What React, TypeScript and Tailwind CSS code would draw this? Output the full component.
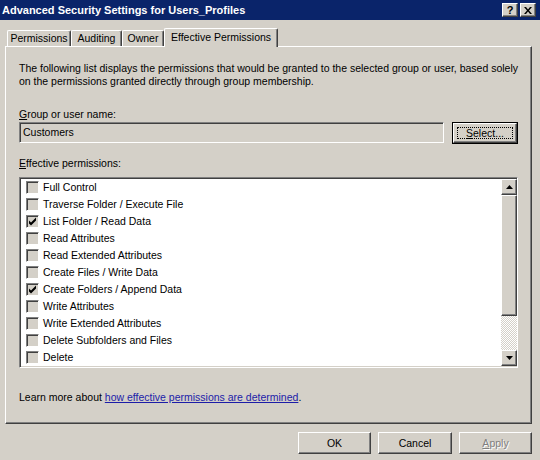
import React from 'react'

const PERMISSIONS: { label: string; checked: boolean }[] = [
  { label: 'Full Control', checked: false },
  { label: 'Traverse Folder / Execute File', checked: false },
  { label: 'List Folder / Read Data', checked: true },
  { label: 'Read Attributes', checked: false },
  { label: 'Read Extended Attributes', checked: false },
  { label: 'Create Files / Write Data', checked: false },
  { label: 'Create Folders / Append Data', checked: true },
  { label: 'Write Attributes', checked: false },
  { label: 'Write Extended Attributes', checked: false },
  { label: 'Delete Subfolders and Files', checked: false },
  { label: 'Delete', checked: false },
]

// classic 3D bevels
const raised =
  'border border-t-white border-l-white border-r-[#404040] border-b-[#404040] shadow-[inset_-1px_-1px_#808080,inset_1px_1px_#d4d0c8]'
const sunken =
  'border border-t-[#808080] border-l-[#808080] border-r-white border-b-white shadow-[inset_1px_1px_#404040,inset_-1px_-1px_#d4d0c8]'

function CheckBox({ checked }: { checked: boolean }) {
  return (
    <span className={`flex h-[13px] w-[13px] shrink-0 items-center justify-center bg-[#d4d0c8] ${sunken}`}>
      {checked && (
        <svg width="9" height="9" viewBox="0 0 9 9">
          <path d="M1 3.5 L3 5.5 L8 0.5 L8 3.5 L3 8.5 L1 6.5 Z" fill="#000" />
        </svg>
      )}
    </span>
  )
}

function Arrow({ up }: { up?: boolean }) {
  return (
    <svg width="7" height="4" viewBox="0 0 7 4">
      <path d={up ? 'M3.5 0 L7 4 L0 4 Z' : 'M0 0 L7 0 L3.5 4 Z'} fill="#000" />
    </svg>
  )
}

function Tab({ label, width, active }: { label: string; width: string; active?: boolean }) {
  return (
    <div
      className={`relative flex shrink-0 items-center justify-center rounded-t-[2px] border-t border-l border-r border-t-white border-l-white border-r-[#404040] bg-[#d4d0c8] shadow-[inset_-1px_0_#808080] ${width} ${
        active ? 'z-10 -mb-px h-[19px] pb-[2px]' : 'h-[16px]'
      }`}
    >
      {label}
    </div>
  )
}

export default function App() {
  return (
    <div className="h-[460px] w-[540px] overflow-hidden bg-[#d4d0c8] font-['Liberation_Sans',Arial,sans-serif] text-[10.5px] leading-[13px] text-black">
      {/* title bar */}
      <div className="flex h-[20px] items-center bg-[#0a246a] pl-[2px] pr-[4px]">
        <span className="text-[11px] font-bold text-white">Advanced Security Settings for Users_Profiles</span>
        <div className="ml-auto flex gap-[2px]">
          <span className={`flex h-[14px] w-[16px] items-center justify-center bg-[#d4d0c8] text-[11px] font-bold leading-none ${raised}`}>
            ?
          </span>
          <span className={`flex h-[14px] w-[16px] items-center justify-center bg-[#d4d0c8] ${raised}`}>
            <svg width="8" height="7" viewBox="0 0 8 7">
              <path d="M0 0 L2 0 L4 2.5 L6 0 L8 0 L5 3.5 L8 7 L6 7 L4 4.5 L2 7 L0 7 L3 3.5 Z" fill="#000" />
            </svg>
          </span>
        </div>
      </div>

      <div className="px-[5px] pt-[8px]">
        {/* tabs */}
        <div className="flex items-end pl-[2px]">
          <Tab label="Permissions" width="w-[64px]" />
          <Tab label="Auditing" width="w-[51px]" />
          <Tab label="Owner" width="w-[42px]" />
          <Tab label="Effective Permissions" width="w-[114px]" active />
        </div>

        {/* panel */}
        <div className="flex h-[378px] w-[527px] flex-col border border-t-white border-l-white border-r-[#404040] border-b-[#404040] pl-[13px] pt-[15px] shadow-[inset_-1px_-1px_#808080]">
          <p>
            The following list displays the permissions that would be granted to the selected group or user, based solely
            <br />
            on the permissions granted directly through group membership.
          </p>

          <div className="mt-[20px]">
            <span className="underline">G</span>roup or user name:
          </div>
          <div className="mt-[1px] flex items-start">
            <div className={`flex h-[21px] w-[425px] items-center bg-[#d4d0c8] pl-[3px] ${sunken}`}>Customers</div>
            <div className="ml-[8px] h-[22px] w-[66px] border border-black">
              <div className={`flex h-full w-full p-[3px] ${raised}`}>
                <span className="flex flex-1 items-center justify-center border border-dotted border-black">
                  <span>
                    <span className="underline">S</span>elect...
                  </span>
                </span>
              </div>
            </div>
          </div>

          <div className="mt-[13px]">
            <span className="underline">E</span>ffective permissions:
          </div>
          <div className={`mt-[7px] flex h-[191px] w-[499px] bg-white ${sunken}`}>
            <div className="flex-1 pl-[6px] pt-[1px]">
              {PERMISSIONS.map((p) => (
                <div key={p.label} className="flex h-[17px] items-center gap-[4px]">
                  <CheckBox checked={p.checked} />
                  <span>{p.label}</span>
                </div>
              ))}
            </div>
            <div className="my-[1px] flex w-[16px] flex-col">
              <div className={`flex h-[16px] items-center justify-center bg-[#d4d0c8] ${raised}`}>
                <Arrow up />
              </div>
              <div className={`h-[121px] bg-[#d4d0c8] ${raised}`} />
              <div className="flex-1 bg-[repeating-conic-gradient(#ffffff_0_25%,#d4d0c8_0_50%)] bg-[length:2px_2px]" />
              <div className={`flex h-[16px] items-center justify-center bg-[#d4d0c8] ${raised}`}>
                <Arrow />
              </div>
            </div>
          </div>

          <div className="mt-[23px]">
            Learn more about{' '}
            <span className="text-[#1c1ca8] underline">how effective permissions are determined</span>.
          </div>
        </div>

        {/* dialog buttons */}
        <div className="mt-[8px] flex justify-end gap-[7px] pr-[3px]">
          <div className={`flex h-[22px] w-[73px] items-center justify-center ${raised}`}>OK</div>
          <div className={`flex h-[22px] w-[74px] items-center justify-center ${raised}`}>Cancel</div>
          <div
            className={`flex h-[22px] w-[73px] items-center justify-center text-[#808080] [text-shadow:1px_1px_0_#fff] ${raised}`}
          >
            <span>
              <span className="underline">A</span>pply
            </span>
          </div>
        </div>
      </div>
    </div>
  )
}
